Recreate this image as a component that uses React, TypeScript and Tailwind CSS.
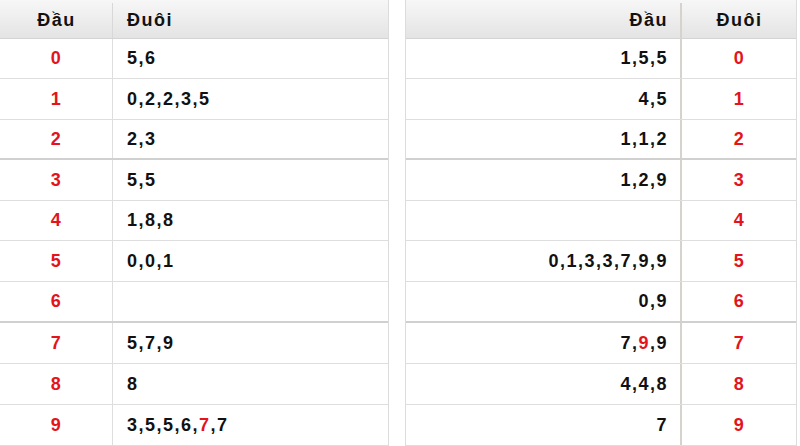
type Cell = { text: string; red?: boolean }[];

const rows: { head: string; left: Cell; right: Cell; h: string; thick?: boolean }[] = [
  { head: "0", left: [{ text: "5,6" }], right: [{ text: "1,5,5" }], h: "h-[40px]" },
  { head: "1", left: [{ text: "0,2,2,3,5" }], right: [{ text: "4,5" }], h: "h-[41px]" },
  { head: "2", left: [{ text: "2,3" }], right: [{ text: "1,1,2" }], h: "h-[40px]", thick: true },
  { head: "3", left: [{ text: "5,5" }], right: [{ text: "1,2,9" }], h: "h-[41px]" },
  { head: "4", left: [{ text: "1,8,8" }], right: [], h: "h-[40px]" },
  { head: "5", left: [{ text: "0,0,1" }], right: [{ text: "0,1,3,3,7,9,9" }], h: "h-[41px]" },
  { head: "6", left: [], right: [{ text: "0,9" }], h: "h-[41px]", thick: true },
  { head: "7", left: [{ text: "5,7,9" }], right: [{ text: "7," }, { text: "9", red: true }, { text: ",9" }], h: "h-[41px]" },
  { head: "8", left: [{ text: "8" }], right: [{ text: "4,4,8" }], h: "h-[41px]" },
  { head: "9", left: [{ text: "3,5,5,6," }, { text: "7", red: true }, { text: ",7" }], right: [{ text: "7" }], h: "h-[41px]" },
];

const Parts = ({ cell }: { cell: Cell }) => (
  <>
    {cell.map((p, i) => (
      <span key={i} className={p.red ? "text-[#e3141b]" : ""}>
        {p.text}
      </span>
    ))}
  </>
);

const headerBg = "bg-gradient-to-b from-[#f7f7f7] to-[#e4e4e4]";

export default function App() {
  return (
    <div
      className="flex h-[446px] w-[800px] overflow-hidden bg-white text-[18px] font-bold tracking-[1.5px] text-[#111]"
      style={{ fontFamily: '"Liberation Sans", Arial, sans-serif' }}
    >
      {/* left table */}
      <div className="flex w-[389px] flex-col border-r border-[#dcdcdc]">
        <div className={`flex h-[39px] shrink-0 items-center border-b border-[#d4d4d4] pt-[3px] ${headerBg}`}>
          <div className="flex h-full w-[113px] items-center justify-center border-r border-[#d8d8d8] pl-[1px]">Đầu</div>
          <div className="pl-[14px]">Đuôi</div>
        </div>
        {rows.map((r) => (
          <div
            key={r.head}
            className={`flex shrink-0 items-center ${r.h} ${r.thick ? "border-b-2 border-[#d0d0d0]" : "border-b border-[#dedede]"}`}
          >
            <div className="flex h-full w-[113px] items-center justify-center border-r border-[#dedede] pl-[1px] text-[#e3141b]">
              {r.head}
            </div>
            <div className="pl-[14px]">
              <Parts cell={r.left} />
            </div>
          </div>
        ))}
      </div>

      <div className="w-[16px]" />

      {/* right table */}
      <div className="flex w-[392px] flex-col border-x border-[#dcdcdc]">
        <div className={`flex h-[39px] shrink-0 items-center border-b border-[#d4d4d4] pt-[3px] ${headerBg}`}>
          <div className="flex h-full flex-1 items-center justify-end border-r-2 border-[#d8d2cc] pr-[12px]">Đầu</div>
          <div className="flex w-[114px] justify-center pl-[1px]">Đuôi</div>
        </div>
        {rows.map((r) => (
          <div
            key={r.head}
            className={`flex shrink-0 items-center ${r.h} ${r.thick ? "border-b-2 border-[#d0d0d0]" : "border-b border-[#dedede]"}`}
          >
            <div className="flex h-full flex-1 items-center justify-end border-r-2 border-[#d8d2cc] pr-[12px]">
              <Parts cell={r.right} />
            </div>
            <div className="flex w-[114px] justify-center pl-[1px] text-[#e3141b]">{r.head}</div>
          </div>
        ))}
      </div>
    </div>
  );
}
